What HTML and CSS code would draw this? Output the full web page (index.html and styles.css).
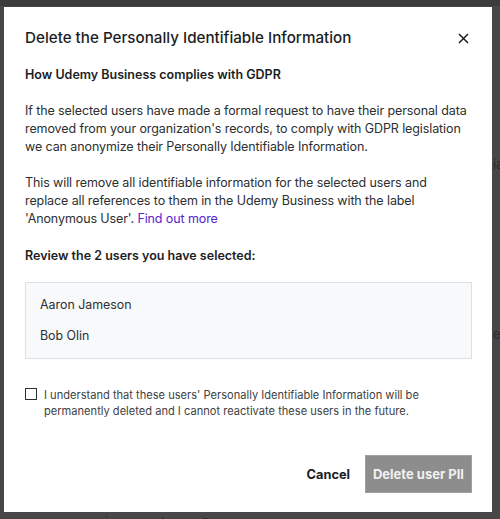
FILE: index.html
```html
<!DOCTYPE html>
<html lang="en">
<head>
    <meta charset="UTF-8">
    <title>Delete user PII</title>
    <link rel="stylesheet" href="styles.css">
</head>
<body>
    <div class="backdrop">
        <span class="behind behind-top">ia</span>
        <span class="behind behind-mid">er</span>
        <span class="behind behind-bottom">jane.sanderson@........com</span>

        <div class="modal">
            <div class="modal-header">
                <h2>Delete the Personally Identifiable Information</h2>
                <button class="close" type="button" aria-label="Close">
                    <svg width="11" height="11" viewBox="0 0 11 11">
                        <path d="M1 1 L10 10 M10 1 L1 10" stroke="#1c1d1f" stroke-width="1.5" fill="none"/>
                    </svg>
                </button>
            </div>

            <h3>How Udemy Business complies with GDPR</h3>

            <p>If the selected users have made a formal request to have their personal data removed from your organization's records, to comply with GDPR legislation we can anonymize their Personally Identifiable Information.</p>

            <p>This will remove all identifiable information for the selected users and replace all references to them in the Udemy Business with the label 'Anonymous User'. <a href="#">Find out more</a></p>

            <h3 class="review">Review the 2 users you have selected:</h3>

            <ul class="users">
                <li>Aaron Jameson</li>
                <li>Bob Olin</li>
            </ul>

            <label class="confirm">
                <span class="box"></span>
                <span>I understand that these users' Personally Identifiable Information will be permanently deleted and I cannot reactivate these users in the future.</span>
            </label>

            <div class="actions">
                <button class="btn-cancel" type="button">Cancel</button>
                <button class="btn-delete" type="button" disabled>Delete user PII</button>
            </div>
        </div>
    </div>
</body>
</html>
```

FILE: styles.css
```css
/* Page */
body {
    margin: 0;
    font-family: 'Inter', 'Helvetica', sans-serif;
    background: #474747;
}

.backdrop {
    position: relative;
    height: 519px;
    overflow: hidden;
    box-sizing: border-box;
    border-top: 6px solid #3c3c3c;
    padding-top: 1px;
}

/* faint page content behind the overlay */
.behind {
    position: absolute;
    color: #2c2c2c;
    font-size: 13px;
}

.behind-top { left: 493px; top: 150px; }
.behind-mid { left: 493px; top: 320px; }
.behind-bottom { left: 105px; top: 508px; }

/* Modal */
.modal {
    position: relative;
    width: 488px;
    height: 505px;
    margin-left: 4px;
    background: #fff;
    padding: 20px 20px 0 21px;
    box-sizing: border-box;
    color: #1c1d1f;
}

.modal-header {
    display: flex;
    justify-content: space-between;
    align-items: center;
}

.modal-header h2 {
    margin: 0;
    font-size: 15.2px;
    font-weight: 500;
    line-height: 22px;
}

.close {
    border: none;
    background: none;
    padding: 0;
    margin-right: 3px;
    width: 11px;
    height: 11px;
    display: flex;
}

h3 {
    margin: 17px 0 0;
    font-size: 12.5px;
    font-weight: 600;
    line-height: 18px;
}

p {
    margin: 18px 0 0;
    font-size: 12.5px;
    letter-spacing: -0.1px;
    line-height: 18px;
    color: #2d2f31;
}

p a {
    color: #5624d0;
    text-decoration: none;
}

h3.review {
    margin-top: 19px;
}

/* Selected users */
.users {
    list-style: none;
    margin: 17px 0 0;
    padding: 11px 14px;
    background: #f7f9fa;
    border: 1px solid #dde1e4;
}

.users li {
    font-size: 12.4px;
    line-height: 18px;
    color: #2d2f31;
    padding: 2px 0;
}

.users li + li {
    margin-top: 9px;
}

/* Checkbox */
.confirm {
    display: flex;
    gap: 7px;
    margin-top: 29px;
    font-size: 11.1px;
    line-height: 15.5px;
    color: #3e4143;
}

.confirm .box {
    flex: none;
    width: 10px;
    height: 10px;
    border: 1.5px solid #2d2f31;
}

/* Buttons */
.actions {
    display: flex;
    justify-content: flex-end;
    align-items: center;
    gap: 15px;
    margin-top: 36px;
}

.btn-cancel {
    border: none;
    background: none;
    font-family: inherit;
    font-size: 12.8px;
    font-weight: 700;
    color: #1c1d1f;
    padding: 0;
}

.btn-delete {
    width: 107px;
    height: 38px;
    background: #8d8d8d;
    border: 1px solid #a0a0a0;
    color: #f1f1f1;
    font-family: inherit;
    font-size: 13px;
    font-weight: 700;
    padding: 0;
}
```
